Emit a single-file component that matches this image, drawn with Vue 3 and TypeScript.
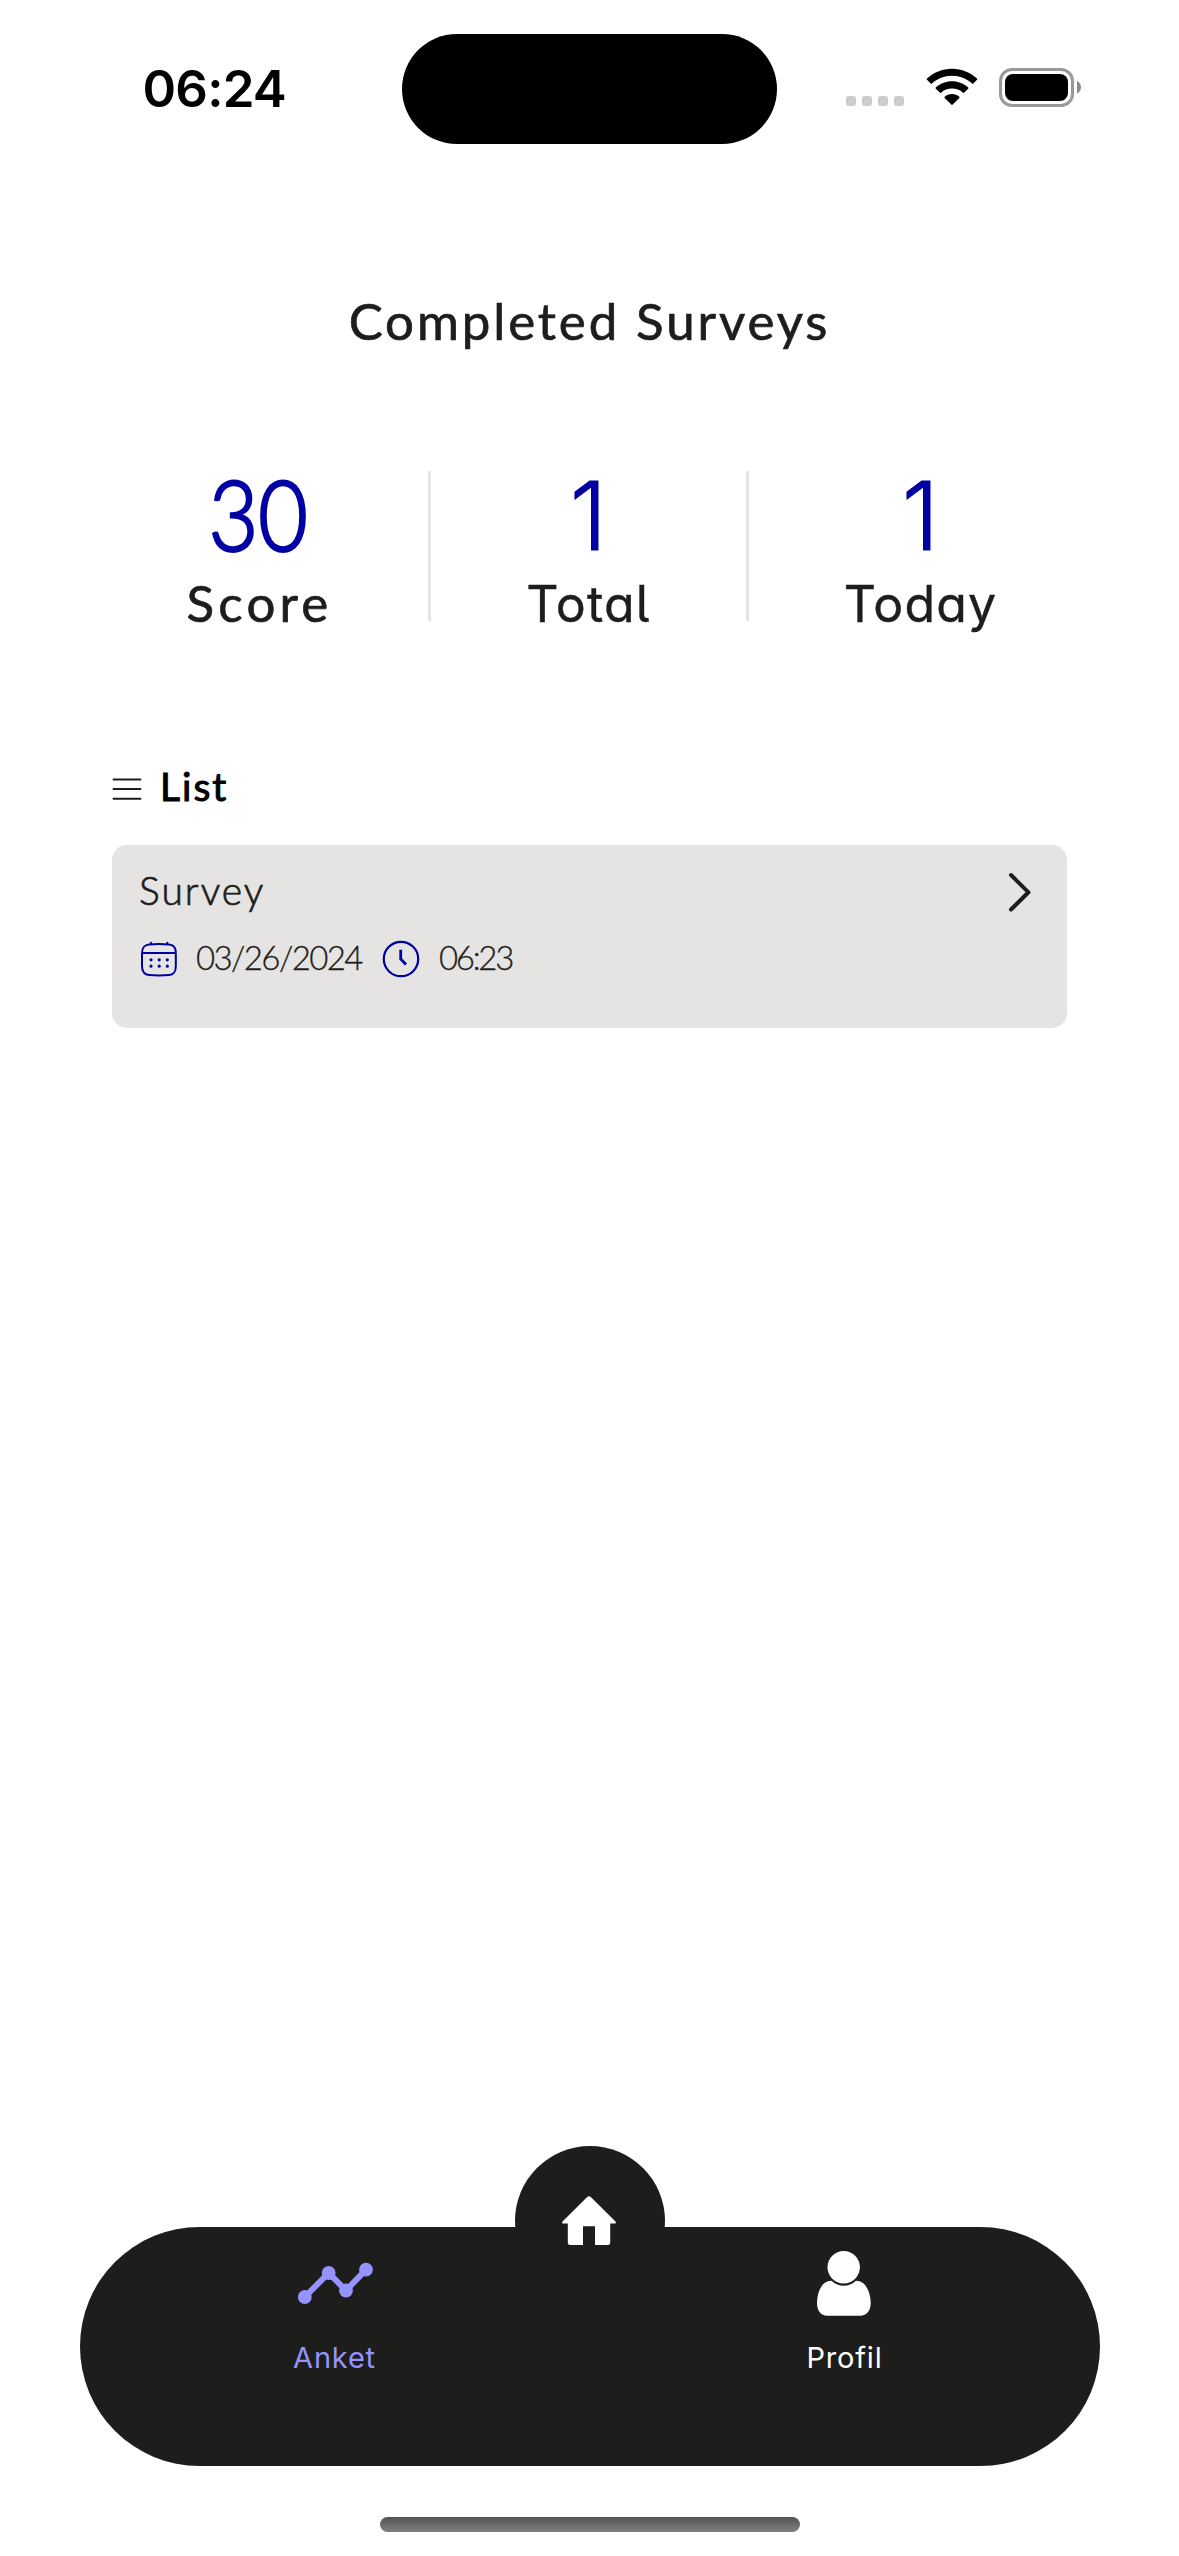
<script setup lang="ts">
interface Stat {
  value: string
  label: string
}

interface Survey {
  title: string
  date: string
  time: string
}

const stats: Stat[] = [
  { value: '30', label: 'Score' },
  { value: '1', label: 'Total' },
  { value: '1', label: 'Today' },
]

const surveys: Survey[] = [{ title: 'Survey', date: '03/26/2024', time: '06:23' }]
</script>

<template>
  <div class="screen">
    <header class="status">
      <span class="clock">06:24</span>
      <div class="island"></div>
      <div class="signal"><i v-for="n in 4" :key="n"></i></div>
      <svg class="wifi" width="52" height="38" viewBox="0 0 52 38">
        <path d="M26 .7C35.800 .7 44.500 4.500 51 10.600Q51.600 11.200 51 11.800L47.300 15.500Q46.700 16 46.100 15.500C40.800 10.600 33.800 7.700 26 7.700S11.200 10.600 5.900 15.500Q5.300 16 4.700 15.500L1 11.800Q.4 11.200 1 10.600C7.500 4.500 16.200 .7 26 .7Z" />
        <path d="M26 13.300C32.200 13.300 37.900 15.700 42.200 19.500Q42.800 20.100 42.200 20.700L38.200 24.600Q37.600 25.200 37 24.700C34 22.100 30.200 20.600 26 20.600S18 22.100 15 24.700Q14.400 25.200 13.800 24.600L9.800 20.700Q9.200 20.100 9.800 19.500C14.100 15.700 19.800 13.300 26 13.300Z" />
        <path d="M26 26C28.800 26 31.300 27 33.300 28.700Q33.900 29.300 33.300 29.900L26.700 36.600Q26 37.300 25.300 36.600L18.700 29.900Q18.100 29.300 18.700 28.700C20.700 27 23.200 26 26 26Z" />
      </svg>
      <svg class="battery" width="83" height="39" viewBox="0 0 83 39">
        <rect x="1.500" y="1.500" width="72" height="36" rx="11.500" fill="none" stroke="#999" stroke-width="3" />
        <rect x="6" y="6" width="63" height="27" rx="8" />
        <path d="M78 13C80.500 14 82 16.500 82 19.300S80.500 24.500 78 25.500Z" fill="#8c8c8c" />
      </svg>
    </header>

    <h1 class="title">Completed Surveys</h1>

    <section class="stats">
      <div v-for="s in stats" :key="s.label" class="stat" :class="s.label.toLowerCase()">
        <strong class="value">{{ s.value }}</strong>
        <span class="label">{{ s.label }}</span>
      </div>
    </section>

    <main class="list">
      <div class="list-head">
        <svg width="30" height="24" viewBox="0 0 30 24">
          <path d="M1.500 2.500h27M1.500 12h27M1.500 21.700h27" stroke="#1d1d1b" stroke-width="1.900" stroke-linecap="round" />
        </svg>
        <h2>List</h2>
      </div>
      <article v-for="s in surveys" :key="s.date" class="card">
        <div class="card-top">
          <h3>{{ s.title }}</h3>
          <svg width="24" height="40" viewBox="0 0 24 40">
            <path d="M3 3L20.500 20.300L3 37.500" fill="none" stroke="#1d1d1b" stroke-width="4" stroke-linecap="round" stroke-linejoin="round" />
          </svg>
        </div>
        <div class="meta">
          <svg class="cal" width="36" height="36" viewBox="0 0 36 36" fill="none" stroke="#0000a4" stroke-width="2" stroke-linecap="round">
            <path d="M1 12.500C1 7 2.500 4.200 8 3.500Q18 2.500 28 3.500C33.500 4.200 34.800 7 34.800 12.500V25C34.800 31 33 33.600 28 34.100Q18 35 8 34.100C3 33.600 1 31 1 25ZM1.500 11.900H34.500M10 1.700V3.500M26.300 1.700V3.500" />
            <path d="M10 18.800h.01M18.200 18.800h.01M26.300 18.800h.01M10 25.200h.01M18.200 25.200h.01M26.300 25.200h.01" stroke-width="3.200" />
          </svg>
          <span class="date">{{ s.date }}</span>
          <svg class="watch" width="38" height="38" viewBox="0 0 38 38" fill="none" stroke="#0000a4">
            <circle cx="19" cy="19" r="17.200" stroke-width="2.200" />
            <path d="M18.700 9.700V19L24 24.500" stroke-width="2.800" />
          </svg>
          <span class="time">{{ s.time }}</span>
        </div>
      </article>
    </main>

    <nav class="tabs">
      <a class="tab active">
        <svg width="80" height="70" viewBox="0 0 80 70">
          <path d="M9.800 43L33.700 19L51 36.500L71 15.700" fill="none" stroke="#9593ff" stroke-width="6" />
          <g fill="#9593ff">
            <circle cx="9.800" cy="43" r="6.900" /><circle cx="33.700" cy="19" r="6.900" />
            <circle cx="51" cy="36.500" r="6.900" /><circle cx="71" cy="15.700" r="6.900" />
          </g>
        </svg>
        <span>Anket</span>
      </a>
      <a class="tab">
        <svg width="80" height="70" viewBox="1 0 80 70" fill="#fff">
          <circle cx="39.700" cy="13.200" r="16.200" />
          <path d="M27.500 26.700C18 26.500 13.200 38 13 48.500C12.900 57 17 61.700 23 61.700H56.500C62.500 61.700 66.800 57 66.700 48.500C66.500 38 61.500 26.500 52 26.700C45 33.300 34.500 33.300 27.500 26.700Z" />
        </svg>
        <span>Profil</span>
      </a>
      <a class="home">
        <svg width="56" height="50" viewBox="1 0 56 50">
          <path d="M26.200 1Q28 -.4 29.800 1L54.500 25.500Q55.600 27.600 53.500 27.600H49.200V46.500Q49.200 49 46.700 49H34V30.300H22V49H9.300Q6.800 49 6.800 46.500V27.600H2.500Q.4 27.600 1.500 25.500Z" fill="#fff" />
        </svg>
      </a>
    </nav>
    <div class="indicator"></div>
  </div>
</template>

<style>
body {
  margin: 0;
  background: #fff;
}
</style>

<style scoped>
.screen {
  width: 1179px;
  height: 2556px;
  display: flex;
  flex-direction: column;
  background: #fff;
  color: #1d1d1b;
  font-family: Lato, "Noto Sans", sans-serif;
  overflow: hidden;
}
h1, h2, h3 {
  margin: 0;
}
svg {
  display: block;
  flex: none;
  overflow: visible;
}
.status {
  display: flex;
  flex: none;
  height: 256px;
  padding-top: 34px;
  box-sizing: border-box;
}
.clock {
  width: 402px;
  padding-left: 142.500px;
  margin-top: 25px;
  box-sizing: border-box;
  font: 600 51px/60px Inter, sans-serif;
  letter-spacing: -0.800px;
  color: #000;
}
.island {
  width: 375px;
  height: 110px;
  border-radius: 55px;
  background: #000;
}
.signal {
  display: flex;
  gap: 6px;
  margin: 62px 0 0 69px;
}
.signal i {
  width: 10px;
  height: 10px;
  border-radius: 3px;
  background: #ccc;
}
.wifi {
  margin: 34px 0 0 21.500px;
}
.battery {
  margin: 34px 0 0 21.500px;
}
.title {
  margin-top: 35px;
  text-align: center;
  font-size: 51px;
  line-height: 60px;
  font-weight: 400;
  letter-spacing: 2.900px;
  -webkit-text-stroke: 0.7px currentColor;
}
.stats {
  display: grid;
  grid-template-columns: 343px 318px 343px;
  height: 150px;
  margin: 120px 0 0 88px;
}
.stat {
  display: flex;
  flex-direction: column;
  align-items: center;
  height: 150px;
  box-sizing: border-box;
}
.stat:not(:last-child) {
  border-right: 3px solid #e5e4e2;
}
.value {
  font-size: 97px;
  line-height: 86px;
  font-weight: 300;
  color: #0000a4;
  transform: scaleX(0.88);
  -webkit-text-stroke: 2.800px currentColor;
}
.total .value, .today .value {
  font-family: Inter, sans-serif;
  font-size: 95px;
  line-height: 90px;
  transform: none;
  -webkit-text-stroke: 1px currentColor;
}
.label {
  margin-top: 16px;
  font-size: 51px;
  line-height: 60px;
  letter-spacing: 4.200px;
  -webkit-text-stroke: 0.7px currentColor;
}
.score .label {
  padding-left: 3px;
}
.total .label, .today .label {
  margin-top: 13px;
  font-family: Inter, sans-serif;
  font-size: 50px;
  letter-spacing: 1.200px;
  -webkit-text-stroke: 0.4px currentColor;
  font-feature-settings: "cv11", "cv05";
}
.list {
  margin: 141px 112px 0;
}
.list-head {
  display: flex;
  align-items: center;
  height: 50px;
  gap: 18px;
  margin-bottom: 33px;
}
.list-head h2 {
  margin-top: -3px;
  font-size: 39px;
  line-height: 50px;
  font-weight: 400;
  letter-spacing: 2px;
  color: #000;
  -webkit-text-stroke: 1px currentColor;
}
.list-head svg {
  margin-top: 4px;
}
.card {
  height: 183px;
  box-sizing: border-box;
  border-radius: 15px;
  background: #e5e4e2;
  padding: 22px 35px 0 29px;
}
.card-top {
  display: flex;
  justify-content: space-between;
  align-items: center;
  height: 50px;
}
.card-top h3 {
  margin: -5px 0 0 -2px;
  font-size: 39px;
  line-height: 50px;
  font-weight: 300;
  letter-spacing: 2px;
  -webkit-text-stroke: 0.7px currentColor;
}
.meta {
  display: flex;
  align-items: center;
  height: 40px;
  margin-top: 22px;
  font-size: 33px;
  line-height: 40px;
  font-weight: 300;
}
.date, .time {
  margin-top: -4px;
  letter-spacing: -1.600px;
  white-space: nowrap;
  -webkit-text-stroke: 0.3px currentColor;
}
.date {
  width: 166px;
  margin-left: 19px;
}
.watch {
  margin-left: 20px;
}
.time {
  margin-left: 19px;
  letter-spacing: -2.300px;
}
.tabs {
  position: relative;
  display: flex;
  flex: none;
  width: 1020px;
  height: 239px;
  margin: 1199px 0 0 80px;
  border-radius: 120px;
  background: #1d1d1b;
}
.tab {
  flex: 1;
  display: flex;
  flex-direction: column;
  align-items: center;
  padding-top: 27px;
  color: #fff;
  font: 400 29px/40px Inter, sans-serif;
  letter-spacing: 0.800px;
}
.tab span {
  margin: 14px 1px 0 0;
}
.active {
  color: #9593ff;
}
.home {
  position: absolute;
  left: 435px;
  top: -81px;
  width: 150px;
  height: 150px;
  border-radius: 50%;
  background: #1d1d1b;
  display: flex;
  align-items: center;
  justify-content: center;
}
.indicator {
  flex: none;
  width: 420px;
  height: 15px;
  margin: 51px auto 0;
  border-radius: 8px;
  background: linear-gradient(#535353, #808080);
}
</style>
